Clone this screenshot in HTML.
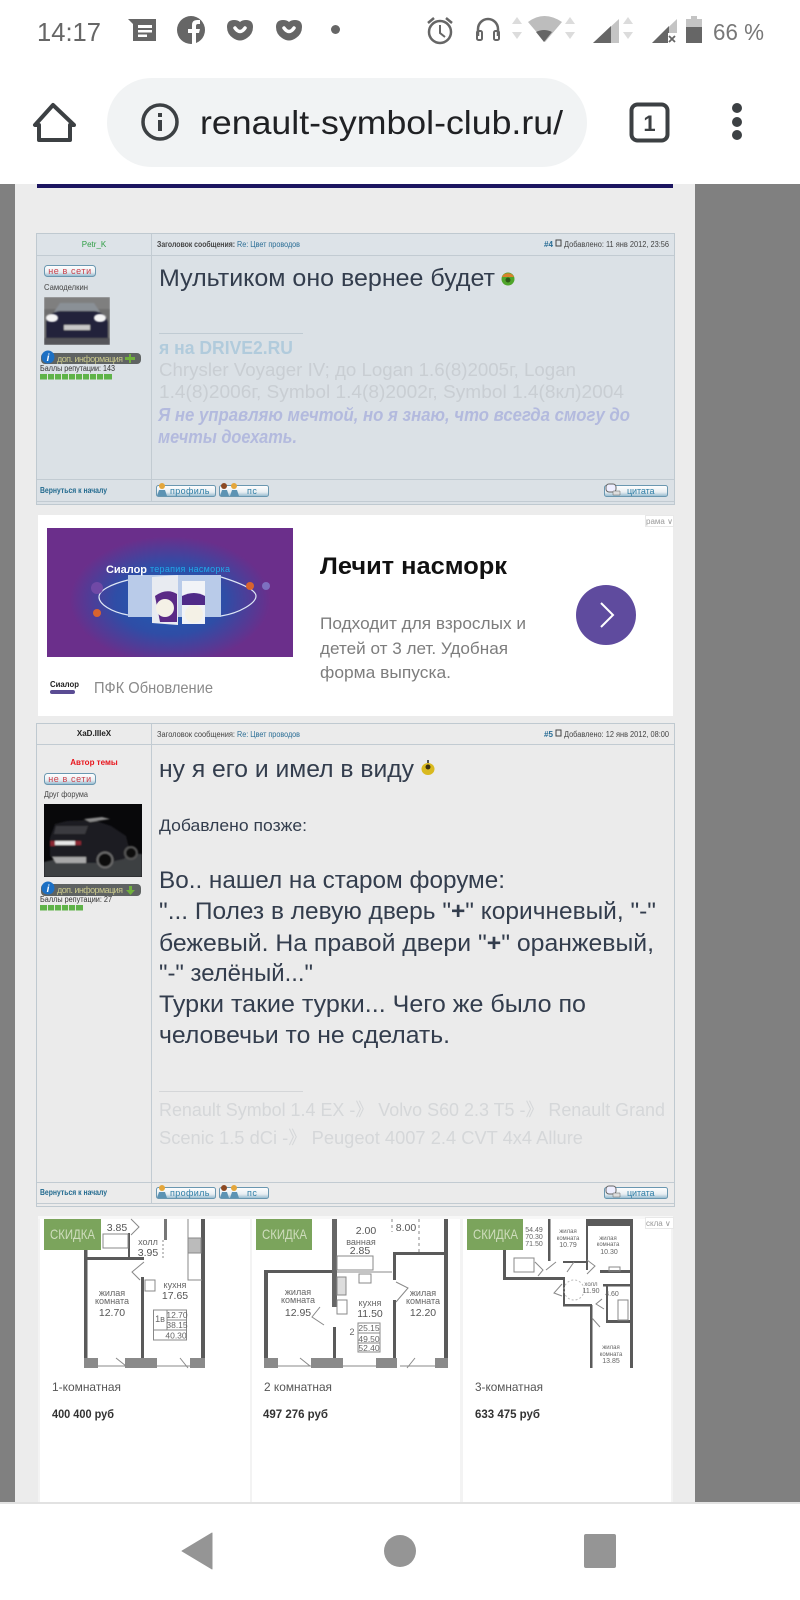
<!DOCTYPE html>
<html lang="ru"><head><meta charset="utf-8"><title>renault-symbol-club.ru</title>
<style>
html,body{margin:0;padding:0;width:800px;height:1600px;overflow:hidden;background:#fff}
svg{display:block;font-family:"Liberation Sans",sans-serif}
.b{fill:#333d4d;font-size:24px}
.s{fill:#c9ced3;font-size:18px}
.sm{font-size:8px;fill:#444}
.l{fill:#2a6d95;font-size:8px}
.bt{fill:#2f7ea6;font-size:9px;letter-spacing:.5px}
.pl{fill:#666;font-size:9px;text-anchor:middle}
.pn{fill:#555;font-size:10.5px;text-anchor:middle}
.d{fill:#7d7d7d;font-size:17px}
</style></head><body>
<svg xmlns="http://www.w3.org/2000/svg" width="800" height="1600" viewBox="0 0 800 1600">
<defs>
<filter id="bl" x="-5%" y="-5%" width="110%" height="110%"><feGaussianBlur stdDeviation="0.35"/></filter>
<filter id="b1" x="-5%" y="-5%" width="110%" height="110%"><feGaussianBlur stdDeviation="0.8"/></filter>
<filter id="b2" x="-20%" y="-20%" width="140%" height="140%"><feGaussianBlur stdDeviation="1.5"/></filter>
<radialGradient id="ad" cx="50%" cy="55%" r="50%"><stop offset="0" stop-color="#1c5fb4"/><stop offset=".55" stop-color="#2f4da6"/><stop offset="1" stop-color="#6a2f8b"/></radialGradient>
<linearGradient id="btn" x1="0" y1="0" x2="0" y2="1"><stop offset="0" stop-color="#fff"/><stop offset=".6" stop-color="#e8eef2"/><stop offset="1" stop-color="#8fb6cc"/></linearGradient>
<clipPath id="c1"><rect x="44" y="297" width="66" height="48"/></clipPath>
<clipPath id="c2"><rect x="44" y="804" width="98" height="73"/></clipPath>
<clipPath id="c3"><rect x="47" y="528" width="246" height="129"/></clipPath>
</defs>

<!-- page -->
<rect width="800" height="1600" fill="#808080"/>
<rect x="15" y="184" width="680" height="1320" fill="#ececec"/>
<rect x="37" y="184" width="636" height="4" fill="#1c1560"/>

<!-- POST 1 -->
<rect x="36.500" y="233.500" width="638" height="271" fill="#dbe1e6" stroke="#bfc9d0"/>
<rect x="37" y="234" width="637" height="21" fill="#dde3e8"/>
<path d="M37 255.500H674M37 479.500H674M37 501.500H674M151.500 234V502" stroke="#c2cbd2" fill="none"/>
<g filter="url(#bl)">
<text x="94" y="247" font-size="8" fill="#2f9e44" text-anchor="middle">Petr_K</text>
<text x="157" y="247" class="sm" font-weight="bold" textLength="78" lengthAdjust="spacingAndGlyphs">Заголовок сообщения:</text>
<text x="237" y="247" class="l" textLength="63" lengthAdjust="spacingAndGlyphs">Re: Цвет проводов</text>
<text x="544" y="247" class="l" font-weight="bold" textLength="9" lengthAdjust="spacingAndGlyphs">#4</text>
<rect x="556" y="240" width="5" height="6" fill="none" stroke="#444" stroke-width="1"/>
<text x="564" y="247" class="sm" textLength="105" lengthAdjust="spacingAndGlyphs">Добавлено: 11 янв 2012, 23:56</text>

<rect x="44.500" y="265.500" width="51" height="11" rx="3" fill="url(#btn)" stroke="#6b97b0"/>
<text x="70" y="274" font-size="9" fill="#c9414b" text-anchor="middle" letter-spacing=".6">не в сети</text>
<text x="44" y="290" font-size="8.500" fill="#444" textLength="44" lengthAdjust="spacingAndGlyphs">Самоделкин</text>
</g>
<g clip-path="url(#c1)"><g filter="url(#b1)">
<rect x="44" y="297" width="66" height="48" fill="#6e6e6e"/>
<path d="M44 297h66v12H44z" fill="#7f7f7f"/>
<path d="M54 312l6-9h34l6 9z" fill="#8a9096"/>
<path d="M46 322q3-10 14-11h34q11 1 14 11v18H46z" fill="#23233a"/>
<rect x="44" y="338" width="66" height="7" fill="#55555a"/>
<rect x="64" y="325" width="26" height="5" fill="#c8c8c8"/>
</g>
<ellipse cx="52" cy="318" rx="6" ry="4" fill="#f5f5f5" filter="url(#b1)"/><ellipse cx="100" cy="318" rx="6" ry="4" fill="#f5f5f5" filter="url(#b1)"/></g>
<g filter="url(#bl)">
<rect x="41" y="353" width="100" height="11" rx="4" fill="#5f6362"/>
<circle cx="48" cy="357" r="6.500" fill="#1f6fc4"/><text x="48" y="361" font-size="10" font-weight="bold" font-style="italic" fill="#fff" text-anchor="middle">i</text>
<text x="57" y="362" font-size="9" fill="#c9c88c" textLength="66" lengthAdjust="spacing">доп. информация</text>
<path d="M131 354v3h4v3h-4v3h-2v-3h-4v-3h4v-3z" fill="#6fb03c"/>
<text x="40" y="371" font-size="8" fill="#333" textLength="75" lengthAdjust="spacingAndGlyphs">Баллы репутации: 143</text>
<rect x="40" y="374" width="72" height="5.500" fill="#5fb34a"/>
<path d="M47.500 374v6M54.500 374v6M61.500 374v6M68.500 374v6M75.500 374v6M82.500 374v6M89.500 374v6M96.500 374v6M103.500 374v6" stroke="#e2e8dc"/>
</g>

<text x="159" y="286" class="b" textLength="336" lengthAdjust="spacingAndGlyphs">Мультиком оно вернее будет</text>
<circle cx="508" cy="279" r="6.500" fill="#4fa52a"/><path d="M502 277a6.500 6 0 0 1 12 0z" fill="#d9822b"/><circle cx="508" cy="280" r="2.500" fill="#2c5a16"/>
<path d="M159 333.500H303" stroke="#c0cbd3"/>
<text x="159" y="354" font-size="18" font-weight="bold" fill="#b1cbdc" textLength="134" lengthAdjust="spacingAndGlyphs">я на DRIVE2.RU</text>
<text x="159" y="376" class="s" textLength="417" lengthAdjust="spacingAndGlyphs">Chrysler Voyager IV; до Logan 1.6(8)2005г, Logan</text>
<text x="159" y="398" class="s" textLength="465" lengthAdjust="spacingAndGlyphs">1.4(8)2006г, Symbol 1.4(8)2002г, Symbol 1.4(8кл)2004</text>
<text x="158" y="421" font-size="18" font-weight="bold" font-style="italic" fill="#b3bade" textLength="472" lengthAdjust="spacingAndGlyphs">Я не управляю мечтой, но я знаю, что всегда смогу до</text>
<text x="158" y="443" font-size="18" font-weight="bold" font-style="italic" fill="#b3bade" textLength="139" lengthAdjust="spacingAndGlyphs">мечты доехать.</text>

<g filter="url(#bl)">
<text x="40" y="493" font-size="8" font-weight="bold" fill="#236a8f" textLength="67" lengthAdjust="spacingAndGlyphs">Вернуться к началу</text>
<rect x="156.500" y="485.500" width="59" height="11" rx="2" fill="url(#btn)" stroke="#6b97b0"/>
<circle cx="162" cy="486" r="3" fill="#e4a63a"/><path d="M157 496l2-6h6l2 6z" fill="#5d93b3"/>
<text x="170" y="494" class="bt" textLength="40" lengthAdjust="spacing">профиль</text>
<rect x="219.500" y="485.500" width="49" height="11" rx="2" fill="url(#btn)" stroke="#6b97b0"/>
<circle cx="224" cy="486" r="3" fill="#8c4a22"/><circle cx="234" cy="486" r="3" fill="#e4a63a"/><path d="M220 496l2-6h5l2 6zM230 496l2-6h5l2 6z" fill="#5d93b3"/>
<text x="247" y="494" class="bt">пс</text>
<rect x="604.500" y="485.500" width="63" height="11" rx="2" fill="url(#btn)" stroke="#6b97b0"/>
<rect x="606" y="484" width="10" height="8" rx="3" fill="#eef" stroke="#666"/><path d="M613 491h7v4h-7z" fill="#ddd" stroke="#666" stroke-width=".5"/>
<text x="627" y="494" class="bt" textLength="28" lengthAdjust="spacing">цитата</text>
</g>

<!-- AD 1 -->
<rect x="38" y="515" width="635" height="201" fill="#fff"/>
<rect x="645.500" y="515.500" width="28" height="11" fill="#fff" stroke="#e8e8e8"/>
<text x="646" y="524" font-size="8" fill="#999" filter="url(#bl)">рама ∨</text>
<rect x="47" y="528" width="246" height="129" fill="#6b2f8b"/>
<g clip-path="url(#c3)"><rect x="70" y="530" width="200" height="127" fill="url(#ad)"/></g>
<g filter="url(#bl)">
<path d="M128 580C112 584 99 590 99 597s12 15 29 18M221 577c16 5 35 12 35 19s-16 17-35 20" fill="none" stroke="#dfe8f6" stroke-width="1.200"/>
<rect x="128" y="575" width="93" height="42" fill="#b9cbe9"/>
<path d="M152 577l26-2v50l-26-2z" fill="#e8ebf1"/><path d="M155 596c8-6 16-6 22-2v28h-17z" fill="#5a2a86"/>
<circle cx="165" cy="608" r="9" fill="#f4f1e6"/>
<rect x="182" y="581" width="23" height="43" fill="#f1f3f7"/><path d="M182 596c8-4 16-4 23 0v9h-23z" fill="#4f2a88"/>
<circle cx="194" cy="614" r="9" fill="#f4f1e6"/>
<circle cx="97" cy="588" r="6" fill="#6f4aa6"/><circle cx="97" cy="613" r="4" fill="#d9642f"/><circle cx="250" cy="586" r="4" fill="#d9642f"/><circle cx="266" cy="586" r="4" fill="#7d6fc0"/>
<text x="106" y="573" font-size="11" font-weight="bold" fill="#fff" textLength="41" lengthAdjust="spacingAndGlyphs">Сиалор</text>
<text x="150" y="572" font-size="9" fill="#21a7e8" textLength="80" lengthAdjust="spacing">терапия насморка</text>
</g>
<text x="320" y="574" font-size="24" font-weight="bold" fill="#111" textLength="187" lengthAdjust="spacingAndGlyphs">Лечит насморк</text>
<text x="320" y="629" class="d" textLength="206" lengthAdjust="spacingAndGlyphs">Подходит для взрослых и</text>
<text x="320" y="654" class="d" textLength="188" lengthAdjust="spacingAndGlyphs">детей от 3 лет. Удобная</text>
<text x="320" y="678" class="d" textLength="131" lengthAdjust="spacingAndGlyphs">форма выпуска.</text>
<circle cx="606" cy="615" r="30" fill="#5f4b9e"/>
<path d="M601 603l12 12-12 12" fill="none" stroke="#fff" stroke-width="2"/>
<text x="50" y="687" font-size="8" font-weight="bold" fill="#222" textLength="29" lengthAdjust="spacingAndGlyphs">Сиалор</text>
<rect x="50" y="690" width="25" height="4" rx="2" fill="#5a4c93"/>
<text x="94" y="693" font-size="16" fill="#8a8a8a" textLength="119" lengthAdjust="spacingAndGlyphs">ПФК Обновление</text>

<!-- POST 2 -->
<rect x="36.500" y="723.500" width="638" height="483" fill="#ebebeb" stroke="#bfc9d0"/>
<path d="M37 744.500H674M37 1182.500H674M37 1203.500H674M151.500 724V1204" stroke="#c2cbd2" fill="none"/>
<g filter="url(#bl)">
<text x="94" y="736" font-size="8" font-weight="bold" fill="#222" text-anchor="middle">XaD.IIIeX</text>
<text x="157" y="737" class="sm" textLength="78" lengthAdjust="spacingAndGlyphs">Заголовок сообщения:</text>
<text x="237" y="737" class="l" textLength="63" lengthAdjust="spacingAndGlyphs">Re: Цвет проводов</text>
<text x="544" y="737" class="l" font-weight="bold" textLength="9" lengthAdjust="spacingAndGlyphs">#5</text>
<rect x="556" y="730" width="5" height="6" fill="none" stroke="#444"/>
<text x="564" y="737" class="sm" textLength="105" lengthAdjust="spacingAndGlyphs">Добавлено: 12 янв 2012, 08:00</text>
<text x="94" y="765" font-size="8" font-weight="bold" fill="#e8141c" text-anchor="middle">Автор темы</text>
<rect x="44.500" y="773.500" width="51" height="11" rx="3" fill="url(#btn)" stroke="#6b97b0"/>
<text x="70" y="782" font-size="9" fill="#c9414b" text-anchor="middle" letter-spacing=".6">не в сети</text>
<text x="44" y="797" font-size="8.500" fill="#444" textLength="44" lengthAdjust="spacingAndGlyphs">Друг форума</text>
</g>
<g clip-path="url(#c2)">
<rect x="44" y="804" width="98" height="73" fill="#08080a"/>
<g filter="url(#b1)">
<path d="M44 862q50-12 98-8v23H44z" fill="#3c3f42"/>
<path d="M50 838l5-14 12-3 26-1 18 6 15 10 4 16-6 7-18 4H62l-12-7z" fill="#1d1d22"/>
<path d="M84 819l18-2 8 2-20 3z" fill="#8a8a8a"/>
<path d="M56 826h32l-3 8H54z" fill="#3a3a40"/>
<path d="M55 841h20v4H55z" fill="#e8e8e8"/><path d="M50 841h5v5h-5zM75 841h6v4h-6z" fill="#8c2730"/>
<path d="M52 857h34v6H56z" fill="#a8a8a8"/>
<circle cx="105" cy="860" r="7.500" fill="#0c0c0c" stroke="#6a6a6a" stroke-width="2"/><circle cx="131" cy="853" r="6" fill="#0c0c0c" stroke="#555" stroke-width="2"/>
</g></g>
<g filter="url(#bl)">
<rect x="41" y="884" width="100" height="12" rx="4" fill="#5f6362"/>
<circle cx="48" cy="888" r="6.500" fill="#1f6fc4"/><text x="48" y="892" font-size="10" font-weight="bold" font-style="italic" fill="#fff" text-anchor="middle">i</text>
<text x="57" y="893" font-size="9" fill="#c9c88c" textLength="66" lengthAdjust="spacing">доп. информация</text>
<path d="M129 886h3v4h3l-4.500 5-4.500-5h3z" fill="#6fb03c"/>
<text x="40" y="902" font-size="8" fill="#333" textLength="72" lengthAdjust="spacingAndGlyphs">Баллы репутации: 27</text>
<rect x="40" y="905" width="43" height="5.500" fill="#5fb34a"/>
<path d="M47.500 905v6M54.500 905v6M61.500 905v6M68.500 905v6M75.500 905v6" stroke="#e2e8dc"/>
</g>

<text x="159" y="777" class="b" textLength="255" lengthAdjust="spacingAndGlyphs">ну я его и имел в виду</text>
<ellipse cx="428" cy="769" rx="6.500" ry="6" fill="#d9b91f"/><circle cx="428" cy="767" r="2.500" fill="#3a3010"/><path d="M428 760v3" stroke="#555" stroke-width="2"/>
<text x="159" y="831" font-size="17" fill="#333d4d" textLength="148" lengthAdjust="spacingAndGlyphs">Добавлено позже:</text>
<text x="159" y="888" class="b" textLength="346" lengthAdjust="spacingAndGlyphs">Во.. нашел на старом форуме:</text>
<text x="159" y="919" class="b" textLength="497" lengthAdjust="spacingAndGlyphs">"... Полез в левую дверь "<tspan font-weight="bold">+</tspan>" коричневый, "-"</text>
<text x="159" y="951" class="b" textLength="495" lengthAdjust="spacingAndGlyphs">бежевый. На правой двери "<tspan font-weight="bold">+</tspan>" оранжевый,</text>
<text x="159" y="981" class="b" textLength="154" lengthAdjust="spacingAndGlyphs">"-" зелёный..."</text>
<text x="159" y="1012" class="b" textLength="427" lengthAdjust="spacingAndGlyphs">Турки такие турки... Чего же было по</text>
<text x="159" y="1043" class="b" textLength="291" lengthAdjust="spacingAndGlyphs">человечьи то не сделать.</text>
<path d="M159 1091.500H303" stroke="#d4d6d8"/>
<text x="159" y="1116" font-size="18" fill="#d5d7d9" textLength="506" lengthAdjust="spacingAndGlyphs">Renault Symbol 1.4 EX -》 Volvo S60 2.3 T5 -》 Renault Grand</text>
<text x="159" y="1144" font-size="18" fill="#d5d7d9" textLength="424" lengthAdjust="spacingAndGlyphs">Scenic 1.5 dCi -》 Peugeot 4007 2.4 CVT 4x4 Allure</text>

<g filter="url(#bl)">
<text x="40" y="1195" font-size="8" font-weight="bold" fill="#236a8f" textLength="67" lengthAdjust="spacingAndGlyphs">Вернуться к началу</text>
<rect x="156.500" y="1187.500" width="59" height="11" rx="2" fill="url(#btn)" stroke="#6b97b0"/>
<circle cx="162" cy="1188" r="3" fill="#e4a63a"/><path d="M157 1198l2-6h6l2 6z" fill="#5d93b3"/>
<text x="170" y="1196" class="bt" textLength="40" lengthAdjust="spacing">профиль</text>
<rect x="219.500" y="1187.500" width="49" height="11" rx="2" fill="url(#btn)" stroke="#6b97b0"/>
<circle cx="224" cy="1188" r="3" fill="#8c4a22"/><circle cx="234" cy="1188" r="3" fill="#e4a63a"/><path d="M220 1198l2-6h5l2 6zM230 1198l2-6h5l2 6z" fill="#5d93b3"/>
<text x="247" y="1196" class="bt">пс</text>
<rect x="604.500" y="1187.500" width="63" height="11" rx="2" fill="url(#btn)" stroke="#6b97b0"/>
<rect x="606" y="1186" width="10" height="8" rx="3" fill="#eef" stroke="#666"/><path d="M613 1193h7v4h-7z" fill="#ddd" stroke="#666" stroke-width=".5"/>
<text x="627" y="1196" class="bt" textLength="28" lengthAdjust="spacing">цитата</text>
</g>

<!-- AD 2 -->
<rect x="38" y="1216" width="635" height="288" fill="#f3f3f3"/>
<rect x="40" y="1219" width="210" height="285" fill="#fff"/>
<rect x="252" y="1219" width="208" height="285" fill="#fff"/>
<rect x="463" y="1219" width="208" height="285" fill="#fff"/>
<rect x="38" y="1216" width="635" height="3" fill="#f7f7f7"/>

<!-- plan 1 -->
<g fill="#5a5a5a">
<rect x="84" y="1250" width="3.500" height="118"/>
<rect x="201" y="1219" width="4" height="149"/>
<rect x="86" y="1257" width="58" height="3"/>
<rect x="141" y="1277" width="3" height="82"/>
<rect x="128" y="1233" width="2" height="25"/>
<rect x="164" y="1219" width="3" height="21" fill="#777"/>
<rect x="84" y="1358" width="14" height="10" fill="#8a8a8a"/><rect x="125" y="1358" width="32" height="10" fill="#8a8a8a"/><rect x="190" y="1358" width="15" height="10" fill="#8a8a8a"/>
</g>
<g fill="none" stroke="#888">
<path d="M103 1234h25v14h-25z"/><path d="M188 1219v61h14"/><path d="M131 1219l8 8-8 8M144 1262l-12 10 8 8"/>
<path d="M163 1240v18" stroke-dasharray="2 2"/>
<path d="M98 1366h27M157 1366h33M116 1358l10 8M180 1358l8 10"/>
<rect x="188" y="1238" width="13" height="15" fill="#bbb"/>
<rect x="145" y="1280" width="10" height="11"/>
<path d="M153.500 1310h33v30h-33zM167 1310v20M167 1320h20M153.500 1330h33"/>
</g>
<g filter="url(#bl)">
<text x="117" y="1231" class="pn">3.85</text>
<text x="148" y="1245" class="pl">холл</text><text x="148" y="1256" class="pn">3.95</text>
<text x="175" y="1288" class="pl">кухня</text><text x="175" y="1299" class="pn">17.65</text>
<text x="112" y="1296" class="pl">жилая</text><text x="112" y="1304" class="pl">комната</text><text x="112" y="1316" class="pn">12.70</text>
<text x="160" y="1322" class="pl">1в</text><text x="177" y="1318" class="pl" style="font-size:8.500px">12.70</text><text x="177" y="1328" class="pl" style="font-size:8.500px">38.15</text><text x="176" y="1338.500" class="pl" style="font-size:8.500px">40.30</text>
</g>

<!-- plan 2 -->
<g fill="#5a5a5a">
<rect x="264" y="1270" width="4" height="98"/>
<rect x="264" y="1270" width="70" height="3"/>
<rect x="332" y="1219" width="5" height="88" fill="#666"/>
<rect x="444" y="1219" width="4" height="149"/>
<rect x="393" y="1252" width="53" height="3"/>
<rect x="393" y="1252" width="3" height="28"/><rect x="393" y="1300" width="3" height="58"/>
<rect x="333" y="1327" width="3" height="32"/>
<rect x="264" y="1358" width="14" height="10" fill="#8a8a8a"/><rect x="311" y="1358" width="32" height="10" fill="#8a8a8a"/><rect x="376" y="1358" width="21" height="10" fill="#8a8a8a"/><rect x="435" y="1358" width="13" height="10" fill="#8a8a8a"/>
</g>
<g fill="none" stroke="#888">
<path d="M337 1256h36v14h-36zM337 1272h55"/>
<rect x="359" y="1274" width="12" height="9"/>
<path d="M392 1219v13" stroke-dasharray="3 3"/><path d="M419 1219v33" stroke-dasharray="3 3"/>
<path d="M396 1282l12 6-12 14M320 1307l-8 10 12 8"/>
<path d="M358 1323h22v29h-22zM358 1333h22M358 1343h22"/>
<path d="M278 1366h33M343 1366h33M400 1366h35M300 1358l10 8M407 1368l8-10"/>
<rect x="337" y="1300" width="10" height="14"/>
<rect x="337" y="1277" width="9" height="18" fill="#ddd"/>
</g>
<g filter="url(#bl)">
<text x="366" y="1234" class="pn">2.00</text><text x="406" y="1231" class="pn">8.00</text>
<text x="361" y="1245" class="pl">ванная</text><text x="360" y="1254" class="pn">2.85</text>
<text x="298" y="1295" class="pl">жилая</text><text x="298" y="1303" class="pl">комната</text><text x="298" y="1316" class="pn">12.95</text>
<text x="370" y="1306" class="pl">кухня</text><text x="370" y="1317" class="pn">11.50</text>
<text x="423" y="1296" class="pl">жилая</text><text x="423" y="1304" class="pl">комната</text><text x="423" y="1316" class="pn">12.20</text>
<text x="352" y="1335" class="pl">2</text><text x="369" y="1331" class="pl" style="font-size:8.500px">25.15</text><text x="369" y="1342" class="pl" style="font-size:8.500px">49.50</text><text x="369" y="1351" class="pl" style="font-size:8.500px">52.40</text>
</g>

<!-- plan 3 -->
<g fill="#5a5a5a">
<rect x="503" y="1250" width="3" height="30"/>
<rect x="503" y="1277" width="62" height="3"/>
<rect x="548" y="1219" width="2.500" height="42"/>
<rect x="563" y="1261" width="23" height="2"/>
<rect x="586" y="1219" width="2" height="51"/>
<rect x="586" y="1219" width="45" height="7"/>
<rect x="630" y="1219" width="3" height="149"/>
<rect x="600" y="1270" width="30" height="3"/><rect x="603" y="1284" width="28" height="2.500"/>
<rect x="563" y="1278" width="2" height="28"/>
<rect x="563" y="1304" width="29" height="2.500"/>
<rect x="590" y="1305" width="2.500" height="63"/>
<rect x="606" y="1285" width="2" height="38"/>
<rect x="606" y="1320" width="24" height="3"/>
</g>
<rect x="592" y="1226" width="36" height="1" fill="#fff"/>
<g fill="none" stroke="#888">
<path d="M514 1258h20v14h-20z"/><path d="M535 1262l8 8-5 6M556 1262l-10 8M574 1262l-7 10M587 1260l8 6-8 8"/>
<circle cx="574" cy="1290" r="10" stroke="#bbb" stroke-dasharray="2 2"/>
<path d="M562 1284l-8 9 8 3M602 1299l-6 5 8 5M592 1318l8 9"/>
<rect x="618" y="1300" width="10" height="20"/><rect x="609" y="1267" width="11" height="4"/>
</g>
<g filter="url(#bl)">
<text x="534" y="1232" class="pl" style="font-size:7px">54.49</text><text x="534" y="1239" class="pl" style="font-size:7px">70.30</text><text x="534" y="1246" class="pl" style="font-size:7px">71.50</text>
<text x="568" y="1233" class="pl" style="font-size:6px">жилая</text><text x="568" y="1240" class="pl" style="font-size:6px">комната</text><text x="568" y="1247" class="pl" style="font-size:7px">10.79</text>
<text x="608" y="1240" class="pl" style="font-size:6px">жилая</text><text x="608" y="1246" class="pl" style="font-size:6px">комната</text><text x="609" y="1254" class="pl" style="font-size:7px">10.30</text>
<text x="591" y="1286" class="pl" style="font-size:6px">холл</text><text x="591" y="1293" class="pl" style="font-size:7px">11.90</text>
<text x="612" y="1296" class="pl" style="font-size:7px">4.60</text>
<text x="611" y="1349" class="pl" style="font-size:6px">жилая</text><text x="611" y="1356" class="pl" style="font-size:6px">комната</text><text x="611" y="1363" class="pl" style="font-size:7px">13.85</text>
</g>

<rect x="645.500" y="1217.500" width="28" height="11" fill="#fff" stroke="#e8e8e8"/>
<text x="646" y="1226" font-size="8" fill="#999" filter="url(#bl)">скла ∨</text>

<rect x="44" y="1219" width="57" height="31" fill="#7ba45c"/>
<rect x="256" y="1219" width="56" height="31" fill="#7ba45c"/>
<rect x="467" y="1219" width="56" height="31" fill="#7ba45c"/>
<g font-size="14" fill="#cfddbd" filter="url(#bl)">
<text x="50" y="1239" textLength="45" lengthAdjust="spacingAndGlyphs">СКИДКА</text>
<text x="262" y="1239" textLength="45" lengthAdjust="spacingAndGlyphs">СКИДКА</text>
<text x="473" y="1239" textLength="45" lengthAdjust="spacingAndGlyphs">СКИДКА</text>
</g>

<g filter="url(#bl)" font-size="12" fill="#555">
<text x="52" y="1391" textLength="69" lengthAdjust="spacingAndGlyphs">1-комнатная</text>
<text x="264" y="1391" textLength="68" lengthAdjust="spacingAndGlyphs">2 комнатная</text>
<text x="475" y="1391" textLength="68" lengthAdjust="spacingAndGlyphs">3-комнатная</text>
</g>
<g filter="url(#bl)" font-size="12" font-weight="bold" fill="#333">
<text x="52" y="1418" textLength="62" lengthAdjust="spacingAndGlyphs">400 400 руб</text>
<text x="263" y="1418" textLength="65" lengthAdjust="spacingAndGlyphs">497 276 руб</text>
<text x="475" y="1418" textLength="65" lengthAdjust="spacingAndGlyphs">633 475 руб</text>
</g>

<!-- status bar + toolbar -->
<rect x="0" y="0" width="800" height="184" fill="#fff"/>
<text x="37" y="41" font-size="26" fill="#666" textLength="64" lengthAdjust="spacingAndGlyphs">14:17</text>
<g fill="#666">
<path d="M128 19h28v22h-23v-17z"/>
<path d="M138 25h14v3h-14zM138 30h14v2.500h-14zM138 34.500h9v2.500h-9z" fill="#fff"/>
<circle cx="191" cy="30" r="14"/>
<path d="M192 44V33h-4v-4h4v-4q0-5 5-5h3v4h-2q-2 0-2 2v3h4l-1 4h-3v11z" fill="#fff"/>
<path d="M227 27q0-7 7-7 4 0 6 2 2-2 6-2 7 0 7 7 0 7-6 11-7 5-14 0-6-4-6-11z"/>
<path d="M235 28q5 7 10 0" fill="none" stroke="#fff" stroke-width="3.500" stroke-linecap="round"/>
<path d="M276 27q0-7 7-7 4 0 6 2 2-2 6-2 7 0 7 7 0 7-6 11-7 5-14 0-6-4-6-11z"/>
<path d="M284 28q5 7 10 0" fill="none" stroke="#fff" stroke-width="3.500" stroke-linecap="round"/>
<circle cx="335.500" cy="29.500" r="4.500"/>
</g>
<g fill="none" stroke="#666" stroke-width="2.500">
<circle cx="440" cy="32" r="11"/>
<path d="M440 25v8l5 4" stroke-width="2"/>
<path d="M428 23l6-5M452 23l-6-5"/>
<path d="M478 36V29a10 10 0 0 1 20 0v7"/>
<rect x="477" y="31" width="5" height="9" rx="1.500" stroke-width="2"/><rect x="494" y="31" width="5" height="9" rx="1.500" stroke-width="2"/>
</g>
<g fill="#dcdcdc">
<path d="M517 17l5 7h-10zM517 39l5-7h-10zM570 17l5 7h-10zM570 39l5-7h-10zM628 17l5 7h-10zM628 39l5-7h-10z"/>
</g>
<path d="M528 22q16-12 34 0l-17 20z" fill="#bdbdbd"/>
<path d="M536 32q8-4 16 0l-8 10z" fill="#666"/>
<path d="M593 43l26-24v24z" fill="#c4c4c4"/><path d="M593 43l18-17v17z" fill="#666"/>
<path d="M652 43l25-24v24z" fill="#c4c4c4"/><path d="M652 43l17-17v17z" fill="#666"/><rect x="668" y="33" width="10" height="11" fill="#fff"/>
<path d="M669 36l6 6M675 36l-6 6" stroke="#666" stroke-width="1.800"/>
<path d="M686 19h5v-3h6v3h5v8h-16z" fill="#c4c4c4"/><rect x="686" y="27" width="16" height="16" fill="#666"/>
<text x="713" y="40" font-size="23" fill="#777" textLength="51" lengthAdjust="spacingAndGlyphs">66 %</text>

<path d="M53 105L35 125h4v15h31v-15h4z" fill="none" stroke="#3c4043" stroke-width="4" stroke-linejoin="round"/>
<rect x="107" y="78" width="480" height="89" rx="44.500" fill="#f1f3f4"/>
<circle cx="160" cy="122" r="17" fill="none" stroke="#3c4043" stroke-width="3.500"/>
<rect x="158" y="120" width="4" height="11" fill="#3c4043"/><rect x="158" y="113" width="4" height="4" fill="#3c4043"/>
<text x="200" y="134" font-size="33" fill="#202124" textLength="363" lengthAdjust="spacingAndGlyphs">renault-symbol-club.ru/</text>
<rect x="631.500" y="104.500" width="36" height="36" rx="6" fill="none" stroke="#3c4043" stroke-width="4"/>
<text x="649.500" y="131" font-size="22" font-weight="bold" fill="#3c4043" text-anchor="middle">1</text>
<circle cx="737" cy="108" r="5" fill="#3c4043"/><circle cx="737" cy="122" r="5" fill="#3c4043"/><circle cx="737" cy="135" r="5" fill="#3c4043"/>

<!-- bottom nav -->
<rect x="0" y="1504" width="800" height="96" fill="#fff"/>
<rect x="0" y="1502" width="800" height="2" fill="#e2e2e2"/>
<path d="M212 1533v36l-30-18z" fill="#959595" stroke="#959595" stroke-linejoin="round" stroke-width="1"/>
<circle cx="400" cy="1551" r="16" fill="#959595"/>
<rect x="584" y="1534" width="32" height="34" rx="2" fill="#959595"/>
</svg>
</body></html>
